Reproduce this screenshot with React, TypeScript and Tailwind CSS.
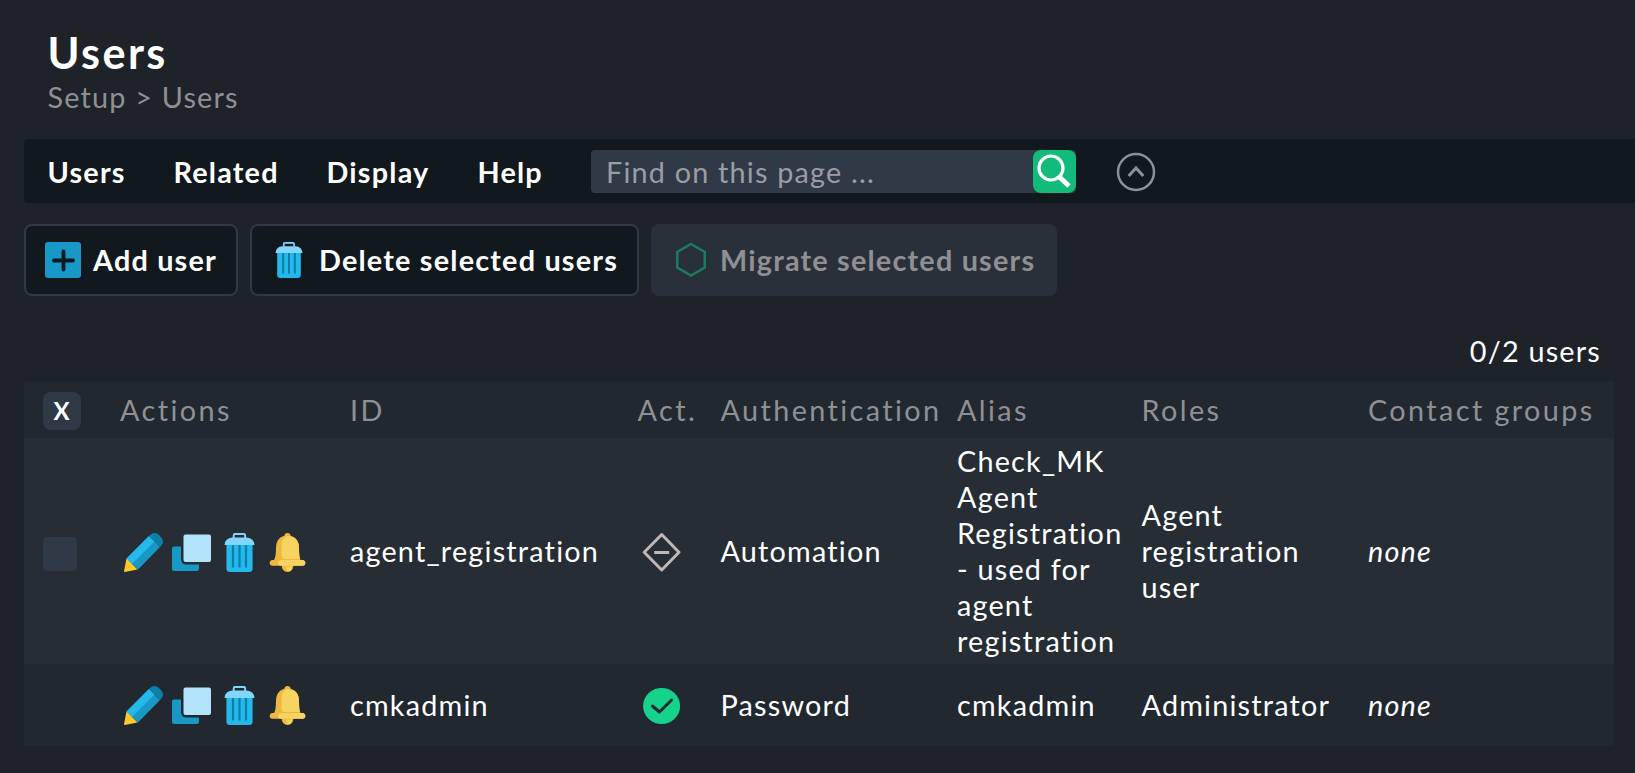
import React from "react";

type IconProps = { className?: string };

function TrashIcon({ className }: IconProps) {
  return (
    <svg viewBox="0 0 32 39" className={className} preserveAspectRatio="none">
      <path d="M10 5V2.2Q10 1 11.200 1H20.600Q21.800 1 21.800 2.200V5" fill="none" stroke="#82d6fb" strokeWidth="2" />
      <path d="M2.500 11H29.500V35.500Q29.500 39 26 39H6Q2.500 39 2.500 35.500Z" fill="#24b8eb" />
      <path d="M0.500 12Q1 5 8.500 4.500H23.500Q31 5 31.500 12Z" fill="#82d6fb" />
      <path d="M9.300 12V34.500M16 12V34.500M22.700 12V34.500" stroke="#0c7fab" strokeWidth="2.300" />
    </svg>
  );
}

function PencilIcon() {
  return (
    <svg viewBox="0 0 48 48" className="size-12">
      <path d="M6.500 29.500L29 7L40 18L18 40.500Z" fill="#1798c7" />
      <path d="M6.500 29.500L29 7L34.500 12.500L12 35Z" fill="#24b8eb" />
      <path d="M29 7L31 5.200Q35.500 2.500 39.500 6.500Q45 11.500 42 15.800L40 18Z" fill="#0c7fab" />
      <path d="M6.500 29.500L17.500 40.500L4.700 43Q4 43 4 42.200Z" fill="#ffca28" />
    </svg>
  );
}

function CopyIcon() {
  return (
    <svg viewBox="0 0 48 48" className="size-12">
      <path d="M6 17.500H13V30Q13 35.500 18.500 35.500H31V40Q31 42 29 42H6Q4 42 4 40V19.500Q4 17.500 6 17.500Z" fill="#1798c7" />
      <rect x="15.500" y="5.500" width="27.500" height="27.500" rx="2" fill="#b3e3fb" />
    </svg>
  );
}

function BellIcon() {
  return (
    <svg viewBox="0 0 48 48" className="size-12">
      <circle cx="23.500" cy="7" r="3" fill="#efb73e" />
      <path d="M17.500 36H29.500Q29 43 23.500 43Q18 43 17.500 36Z" fill="#efb73e" />
      <path d="M22 37.500H28Q28 42 24.500 42.300Q21.800 41.500 22 37.500Z" fill="#f7d35f" />
      <path d="M23.500 6Q35 7.500 35 19Q35 28 36.500 31H38.500Q41.300 31.300 41.300 34Q41.300 36.700 38.500 36.700H8.500Q5.700 36.700 5.700 34Q5.700 31.300 8.500 31H10Q12 28 12 19Q12 7.500 23.500 6Z" fill="#efb73e" />
      <path d="M23.500 7Q35 8 35 19Q35 27 36 30H19.500Q17.500 29 17.500 26V16Q17.500 9 23.500 7Z" fill="#f7d35f" />
      <path d="M17 31H38.500Q41.300 31.300 41.300 34Q41.300 36.700 38.500 36.700H17Q14 36.400 14 34Q14 31.500 17 31Z" fill="#f7d35f" />
    </svg>
  );
}

function InactiveIcon() {
  return (
    <svg viewBox="0 0 40 40" className="size-10">
      <path d="M19.700 2.500L37 20.200L19.700 38L2.200 20.200Z" fill="none" stroke="#bfb6b6" strokeWidth="3" strokeLinejoin="round" />
      <path d="M12.200 20.500H27.200" stroke="#bfb6b6" strokeWidth="3" />
    </svg>
  );
}

function ActiveIcon() {
  return (
    <svg viewBox="0 0 40 40" className="size-10">
      <ellipse cx="19.600" cy="20" rx="18.500" ry="18" fill="#15d38b" />
      <path d="M10.400 20L17.400 26L29.600 14" fill="none" stroke="#21282f" strokeWidth="3" strokeLinecap="round" strokeLinejoin="round" />
    </svg>
  );
}

const menu = [
  { label: "Users", width: "w-[126px]" },
  { label: "Related", width: "w-[153px]" },
  { label: "Display", width: "w-[151px]" },
  { label: "Help", width: "w-[113px]" },
];

const columns = [
  { label: "Actions", width: "w-[230px]" },
  { label: "ID", width: "w-[287.500px]" },
  { label: "Act.", width: "w-[83px]" },
  { label: "Authentication", width: "w-[236.500px]" },
  { label: "Alias", width: "w-[184.500px]" },
  { label: "Roles", width: "w-[226.500px]" },
  { label: "Contact groups", width: "w-[246px]" },
];

const users = [
  {
    id: "agent_registration",
    active: false,
    selectable: true,
    auth: "Automation",
    alias: "Check_MK Agent Registration - used for agent registration",
    role: "Agent registration user",
    row: "h-[226px] bg-[#262d34]",
    actions: "pt-[3px]",
  },
  {
    id: "cmkadmin",
    active: true,
    selectable: false,
    auth: "Password",
    alias: "cmkadmin",
    role: "Administrator",
    row: "h-[82px] bg-[#21282f]",
    actions: "pt-px",
  },
];

export default function App() {
  return (
    <div className="h-[773px] w-full overflow-hidden bg-[#1e2229] pl-6 font-['Lato',sans-serif] text-[28.8px] leading-9 tracking-[1.2px] text-white">
      <header className="h-[139px] pt-[26px] pl-[23.500px]">
        <h1 className="text-[43.2px] leading-[53px] font-bold tracking-[2.4px]">Users</h1>
        <div className="text-[#8f9094]">Setup &gt; Users</div>
      </header>

      <nav className="flex h-16 items-center rounded-l bg-[#11181e] pl-[23.500px] font-bold">
        {menu.map((m) => (
          <a key={m.label} className={`${m.width} pt-0.5`}>{m.label}</a>
        ))}
        <div className="ml-[0.500px] flex h-[43px] w-[485px] items-center justify-between rounded bg-[#303946]">
          <span className="pt-0.5 pl-[15px] font-normal text-[#9a9da4]">Find on this page ...</span>
          <button className="flex size-[43px] items-center justify-center rounded-lg bg-[#13bb7b]">
            <svg viewBox="0 0 43 43" className="size-[43px]">
              <circle cx="18" cy="18" r="12" fill="none" stroke="#fff" strokeWidth="3.200" />
              <path d="M26 26.500L36 36" stroke="#fff" strokeWidth="4.800" />
            </svg>
          </button>
        </div>
        <svg viewBox="0 0 40 40" className="mt-0.5 ml-10 size-10">
          <circle cx="20" cy="20" r="18" fill="none" stroke="#8f9094" strokeWidth="2.500" />
          <path d="M12.700 24L20 16L27.300 24" fill="none" stroke="#8f9094" strokeWidth="3" />
        </svg>
      </nav>

      <div className="mt-[21px] flex h-[72px] gap-3 font-bold">
        <button className="flex w-[214px] items-center rounded-lg border-2 border-[#303946] bg-[#11181e] pl-[19px]">
          <svg viewBox="0 0 36 36" className="size-9">
            <rect width="36" height="36" rx="3" fill="#1798c7" />
            <path d="M18.500 9.500V27.500M9 18.500H28" stroke="#11181e" strokeWidth="3.800" strokeLinecap="round" />
          </svg>
          <span className="ml-3">Add user</span>
        </button>
        <button className="flex w-[389px] items-center rounded-lg border-2 border-[#303946] bg-[#11181e] pl-[23px]">
          <TrashIcon className="h-9 w-7" />
          <span className="ml-4">Delete selected users</span>
        </button>
        <button className="flex w-[406px] items-center rounded-lg bg-[#2a303a] pl-[25px] text-[#8f9094]">
          <svg viewBox="0 0 30 36" className="h-9 w-[30px]">
            <path d="M15 2L28.800 10V25.500L15 33.500L1.200 25.500V10Z" fill="none" stroke="#197d5b" strokeWidth="2.600" />
          </svg>
          <span className="ml-3.5">Migrate selected users</span>
        </button>
      </div>

      <div className="h-[85px] pt-[37px] pr-[34px] text-right">0/2 users</div>

      <table className="w-[1590px] table-fixed border-collapse text-left">
        <thead>
          <tr className="h-[57px] bg-[#21282f] text-[#8f9094]">
            <th className="w-24 p-0 pt-[3px] pl-[19px]">
              <button className="flex size-[38px] items-center justify-center rounded-lg bg-[#303946] pr-px text-2xl font-bold tracking-normal text-white">X</button>
            </th>
            {columns.map((c) => (
              <th key={c.label} className={`${c.width} p-0 font-normal tracking-[2.4px] whitespace-nowrap`}>{c.label}</th>
            ))}
          </tr>
        </thead>
        <tbody>
          {users.map((u) => (
            <tr key={u.id} className={u.row}>
              <td className="p-0 pl-[19px]">
                {u.selectable && <div className="mt-1.5 size-[34px] rounded bg-[#303946]" />}
              </td>
              <td className={`p-0 ${u.actions}`}>
                <div className="flex">
                  <PencilIcon />
                  <CopyIcon />
                  <span className="flex size-12 justify-center pt-1 pr-px">
                    <TrashIcon className="h-[39px] w-[31px]" />
                  </span>
                  <BellIcon />
                </div>
              </td>
              <td className="p-0">{u.id}</td>
              <td className="p-0 pt-0.5 pl-1">{u.active ? <ActiveIcon /> : <InactiveIcon />}</td>
              <td className="p-0">{u.auth}</td>
              <td className="p-0 pr-2.5">{u.alias}</td>
              <td className="p-0 pr-2.5">{u.role}</td>
              <td className="p-0 italic">none</td>
            </tr>
          ))}
        </tbody>
      </table>
    </div>
  );
}
